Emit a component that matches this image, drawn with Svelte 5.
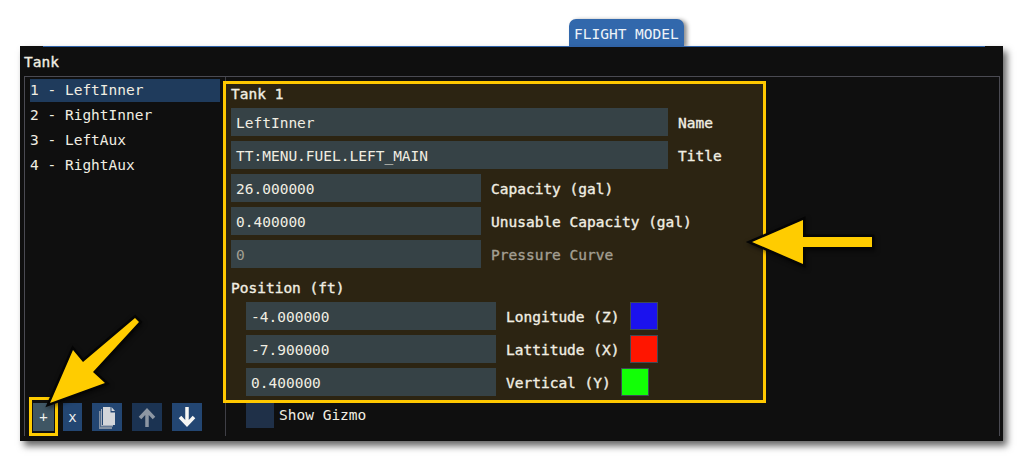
<script lang="ts">
const tanks = ["1 - LeftInner", "2 - RightInner", "3 - LeftAux", "4 - RightAux"];
const fullRows = [
  { value: "LeftInner", label: "Name" },
  { value: "TT:MENU.FUEL.LEFT_MAIN", label: "Title" },
];
const shortRows = [
  { value: "26.000000", label: "Capacity (gal)", dim: false },
  { value: "0.400000", label: "Unusable Capacity (gal)", dim: false },
  { value: "0", label: "Pressure Curve", dim: true },
];
const positionRows = [
  { value: "-4.000000", label: "Longitude (Z)", color: "#1b12ee" },
  { value: "-7.900000", label: "Lattitude (X)", color: "#ff1500" },
  { value: "0.400000", label: "Vertical (Y)", color: "#12ff06" },
];
</script>

<div class="page">
  <div class="tab-row">
    <div class="tab">FLIGHT MODEL</div>
  </div>

  <section class="window">
    <div class="rule"></div>
    <h1>Tank</h1>
    <div class="panel">
      <aside class="list-col">
        <ul>
          {#each tanks as tank, i}
            <li class:selected={i === 0}>{tank}</li>
          {/each}
        </ul>
        <div class="actions">
          <span class="add-ring"><button type="button" class="add">+</button></span>
          <button type="button" class="small">x</button>
          <button type="button" class="icon" aria-label="Copy">
            <svg viewBox="0 0 30 28" width="30" height="28">
              <path d="M7 8h1.500v16H20v2H7z" fill="#8492a3" />
              <path d="M9 6h1v16h11v1.500H9z" fill="#a5aebb" />
              <path d="M11 4h7.500v5.500H23V22H11z" fill="#d3d6da" />
              <path d="M19.500 4 23 8h-3.500z" fill="#d3d6da" />
            </svg>
          </button>
          <button type="button" class="icon muted" aria-label="Move up">
            <svg viewBox="0 0 30 28" width="30" height="28">
              <path d="M15 24V7M8 15 15 7.500 22 15" fill="none" stroke="#8d97a3" stroke-width="3.500" />
            </svg>
          </button>
          <button type="button" class="icon" aria-label="Move down">
            <svg viewBox="0 0 30 28" width="30" height="28">
              <path d="M15 4V22M8 14 15 21.500 22 14" fill="none" stroke="#f7f7f4" stroke-width="3.500" />
            </svg>
          </button>
        </div>
      </aside>

      <div class="detail">
        <div class="highlight">
          <h2>Tank 1</h2>
          {#each fullRows as row}
            <div class="row">
              <div class="field wide">{row.value}</div>
              <span class="label">{row.label}</span>
            </div>
          {/each}
          {#each shortRows as row}
            <div class="row" class:dim={row.dim}>
              <div class="field">{row.value}</div>
              <span class="label">{row.label}</span>
            </div>
          {/each}
          <h2 class="section">Position (ft)</h2>
          {#each positionRows as row}
            <div class="row indented">
              <div class="field">{row.value}</div>
              <span class="label">{row.label}</span>
              <span class="swatch" style="background: {row.color}"></span>
            </div>
          {/each}
        </div>
        <div class="gizmo">
          <span class="checkbox"></span>
          <span>Show Gizmo</span>
        </div>
      </div>
    </div>
  </section>

  <svg class="arrows" viewBox="0 0 1023 461" width="1023" height="461" aria-hidden="true">
    <path d="M752 242 803 220V237H872V247H803V264Z" fill="#ffcc00" stroke="#050505" stroke-width="5" stroke-linejoin="miter" paint-order="stroke" />
    <path d="M50 403 73 350 83 362 135 318 139 322 93 372 105 383Z" fill="#ffcc00" stroke="#050505" stroke-width="5" stroke-linejoin="miter" paint-order="stroke" />
  </svg>
</div>

<style>
  :global(body) {
    margin: 0;
    background: #ffffff;
  }

  .page {
    position: relative;
    width: 1023px;
    height: 461px;
    overflow: hidden;
    padding-top: 19px;
    box-sizing: border-box;
    font-family: "DejaVu Sans Mono", monospace;
    font-size: 14.500px;
    color: #f1eee2;
  }

  .tab-row {
    display: flex;
    padding-left: 569px;
  }

  .tab {
    width: 115px;
    height: 27px;
    box-sizing: border-box;
    padding: 6px 0 0 5px;
    border-radius: 7px 7px 0 0;
    background: #3268ac;
    color: #eef3f8;
    line-height: 18px;
    box-shadow: 3px 1px 4px rgba(0, 0, 0, 0.45);
  }

  .window {
    position: relative;
    width: 983px;
    height: 395px;
    margin-left: 20px;
    background: #0f0f0f;
    box-shadow: 4px 5px 7px rgba(0, 0, 0, 0.6);
  }

  .rule {
    position: absolute;
    top: 0;
    left: 23px;
    width: 942px;
    height: 1px;
    background: #2f62a8;
  }

  h1 {
    margin: 0;
    height: 30px;
    padding: 7px 0 0 4px;
    box-sizing: border-box;
    font-size: inherit;
    font-weight: 400;
    line-height: 18px;
    -webkit-text-stroke: 0.35px currentColor;
  }

  .panel {
    display: flex;
    width: 976px;
    height: 360px;
    margin-left: 4px;
    box-sizing: border-box;
    border-top: 1px solid #4a4a52;
    border-left: 1px solid #4a4a52;
    border-right: 1px solid #4a4a52;
  }

  .list-col {
    display: flex;
    flex-direction: column;
    justify-content: space-between;
    width: 201px;
    flex: none;
    box-sizing: border-box;
    padding: 2px 5px 5px;
    border-right: 1px solid #3f3f46;
  }

  ul {
    margin: 0;
    padding: 0;
    list-style: none;
  }

  li {
    height: 23px;
    margin-bottom: 2px;
    line-height: 23px;
  }

  li.selected {
    background: #1f3b5c;
  }

  .actions {
    display: flex;
    align-items: flex-start;
    gap: 10px;
    height: 28px;
  }

  button {
    border: none;
    padding: 0;
    color: #f1f1ee;
    font: inherit;
    background: #234672;
  }

  .add-ring {
    display: flex;
    margin: -6px 0 -5px -1px;
    border: 3px solid #ffcc00;
    padding: 3px 1px 2px;
  }

  .add {
    width: 21px;
    height: 28px;
    background: #3f5664;
    font-size: 14px;
  }

  .small {
    width: 19px;
    height: 28px;
    margin-left: -5px;
    font-size: 14px;
  }

  .icon {
    display: flex;
    width: 30px;
    height: 28px;
  }

  .icon.muted {
    background: #1b3352;
  }

  .detail {
    flex: 1;
    min-width: 0;
  }

  .highlight {
    position: relative;
    z-index: 1;
    width: 543px;
    height: 322px;
    margin: 4px 0 0 -3px;
    box-sizing: border-box;
    border: 3px solid #ffc800;
    padding: 0 0 0 5px;
    background: #2c2412;
  }

  h2 {
    margin: 0;
    height: 24px;
    font-size: inherit;
    font-weight: 400;
    line-height: 20px;
    -webkit-text-stroke: 0.35px currentColor;
  }

  .section {
    height: 29px;
    padding-top: 6px;
    box-sizing: border-box;
    line-height: 18px;
  }

  .row {
    display: flex;
    align-items: center;
    gap: 10px;
    height: 28px;
    margin-bottom: 5px;
  }

  .indented {
    padding-left: 15px;
  }

  .field {
    width: 250px;
    height: 28px;
    box-sizing: border-box;
    padding-left: 5px;
    background: #364246;
    line-height: 31px;
    white-space: nowrap;
  }

  .wide {
    width: 437px;
  }

  .label {
    padding-top: 2px;
    -webkit-text-stroke: 0.35px currentColor;
  }

  .dim {
    color: #a39f92;
  }

  .swatch {
    width: 26px;
    height: 26px;
    border: 1px solid #3f4a55;
  }

  .gizmo {
    display: flex;
    align-items: center;
    gap: 5px;
    margin: -1px 0 0 20px;
    line-height: 26px;
  }

  .checkbox {
    width: 28px;
    height: 26px;
    background: #1f3048;
  }

  .arrows {
    position: absolute;
    top: 0;
    left: 0;
    z-index: 2;
    filter: drop-shadow(1px 2px 2px rgba(0, 0, 0, 0.5));
  }
</style>
